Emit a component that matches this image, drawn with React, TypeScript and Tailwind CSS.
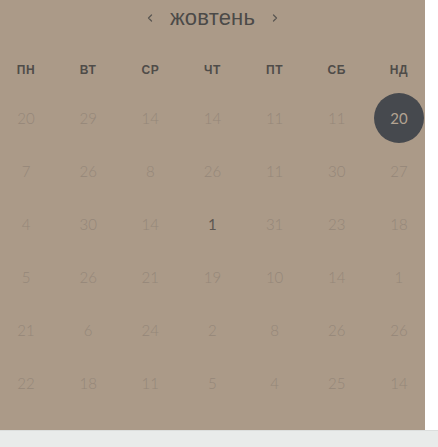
import { ChevronLeft, ChevronRight } from "lucide-react";

const DAYS = ["пн", "вт", "ср", "чт", "пт", "сб", "нд"];

const WEEKS = [
  [20, 29, 14, 14, 11, 11, 20],
  [7, 26, 8, 26, 11, 30, 27],
  [4, 30, 14, 1, 31, 23, 18],
  [5, 26, 21, 19, 10, 14, 1],
  [21, 6, 24, 2, 8, 26, 26],
  [22, 18, 11, 5, 4, 25, 14],
];

export default function App() {
  return (
    <div className="h-[447px] w-[438px] overflow-hidden bg-white" style={{ fontFamily: "'Liberation Sans', Arial, sans-serif" }}>
      <div className="flex h-[430px]">
        <div className="w-[425px] bg-[#ab9a88] px-[1px]">
          <div className="flex h-[34px] items-center justify-center gap-[14px] pt-[1px] text-[#4b4a48]">
            <ChevronLeft size={12} strokeWidth={2.5} className="text-[#5a5652]" />
            <span className="text-[22px] leading-none tracking-[0.2px]">жовтень</span>
            <ChevronRight size={12} strokeWidth={2.5} className="text-[#5a5652]" />
          </div>

          <div className="mt-[22px] flex justify-between">
            {DAYS.map((d) => (
              <div key={d} className="w-[50px] text-center text-[12px] font-bold uppercase leading-[28px] tracking-[0.6px] text-[#4f4c49]">
                {d}
              </div>
            ))}
          </div>

          <div className="mt-[9px] flex flex-col gap-y-[3px] font-['Lato',sans-serif]">
            {WEEKS.map((row, r) => (
              <div key={r} className="flex justify-between">
                {row.map((n, c) => {
                  const selected = r === 0 && c === 6;
                  const today = r === 2 && c === 3;
                  return (
                    <div
                      key={c}
                      className={
                        "flex h-[50px] w-[50px] items-center justify-center rounded-full text-[15px] font-light " +
                        (selected
                          ? "bg-[#46494e] font-normal text-[#b3a392]"
                          : today
                            ? "font-normal text-[#5e5751]"
                            : "text-[#958779]")
                      }
                    >
                      {n}
                    </div>
                  );
                })}
              </div>
            ))}
          </div>
        </div>
        <div className="flex-1 bg-white" />
      </div>
      <div className="h-[17px] border-t border-[#dcdedd] bg-[#e9ebea]" />
    </div>
  );
}
